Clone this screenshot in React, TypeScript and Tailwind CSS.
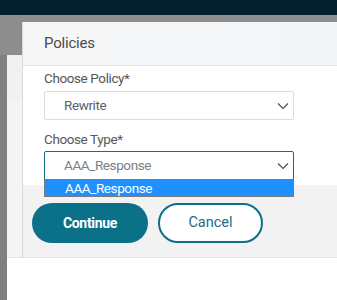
import React from "react";

const Chevron = () => (
  <svg width="12" height="8" viewBox="0 0 12 8" className="shrink-0">
    <polyline points="1,1.5 6,6.5 11,1.5" fill="none" stroke="#4a4f57" strokeWidth="1.2" />
  </svg>
);

const App = () => {
  return (
    <div
      className="w-[337px] h-[300px] overflow-hidden flex flex-col bg-[#8e8e8e]"
      style={{ fontFamily: "Roboto, 'Liberation Sans', sans-serif" }}
    >
      <div className="h-[15px] shrink-0 bg-[#03202d]" />
      <div className="relative flex-1 flex pt-[40px]">
        {/* page behind the modal */}
        <div className="w-[7px] shrink-0 bg-[#808080]" />
        <div className="flex-1 flex flex-col bg-white">
          <div className="h-[46px] bg-[#f1f1f1]" />
          <div className="h-[157px] bg-[#f5f5f5] border-b border-[#e6e6e6]" />
        </div>

        {/* modal */}
        <div className="absolute left-[22px] top-[7px] w-[330px] flex flex-col bg-white border-l border-[#d9d9d9]">
          <div className="h-[44px] flex items-center px-[21px] bg-gradient-to-r from-[#f7f7f7] to-[#f2f6f9] border-b border-[#dfe5e9]">
            <span className="text-[15px] tracking-[-0.2px] text-[#4b4b4b]">Policies</span>
          </div>
          <div className="flex flex-col px-[21px] pt-[2px] pb-[5px] w-[292px]">
            <label className="text-[13.5px] tracking-[-0.4px] leading-[20px] text-[#575757]">Choose Policy*</label>
            <div className="mt-[3px] h-[29px] flex items-center justify-between pl-[19px] pr-[4px] border border-[#dcdcdc] rounded-[2px]">
              <span className="text-[13.5px] tracking-[-0.4px] text-[#566375]">Rewrite</span>
              <Chevron />
            </div>
            <label className="mt-[9px] text-[13.5px] tracking-[-0.4px] leading-[20px] text-[#575757]">Choose Type*</label>
            <div className="relative mt-[2px] h-[29px] flex items-center justify-between pl-[19px] pr-[4px] border border-[#116f83] rounded-t-[2px]">
              <span className="text-[13.5px] tracking-[-0.4px] text-[#7a7f88]">AAA_Response</span>
              <Chevron />
              <div className="absolute left-[-1px] right-[-1px] top-full h-[18px] flex items-center pl-[20px] bg-[#1e90ff] border border-[#7a7a7a] z-10">
                <span className="text-[13.5px] tracking-[-0.4px] leading-[16px] text-white">AAA_Response</span>
              </div>
            </div>
          </div>
          <div className="h-[73px] flex items-start gap-[10px] pl-[9px] pt-[18px] bg-[#f2f2f2] border-b border-[#e3e6e9]">
            <button className="w-[116px] h-[40px] rounded-full bg-[#0b7189] text-white text-[14px] tracking-[-0.3px] font-bold">
              Continue
            </button>
            <button className="w-[105px] h-[40px] rounded-full bg-white border-2 border-[#0d6f85] text-[#1d6d82] text-[14.5px]">
              Cancel
            </button>
          </div>
        </div>
      </div>
    </div>
  );
};

export default App;
